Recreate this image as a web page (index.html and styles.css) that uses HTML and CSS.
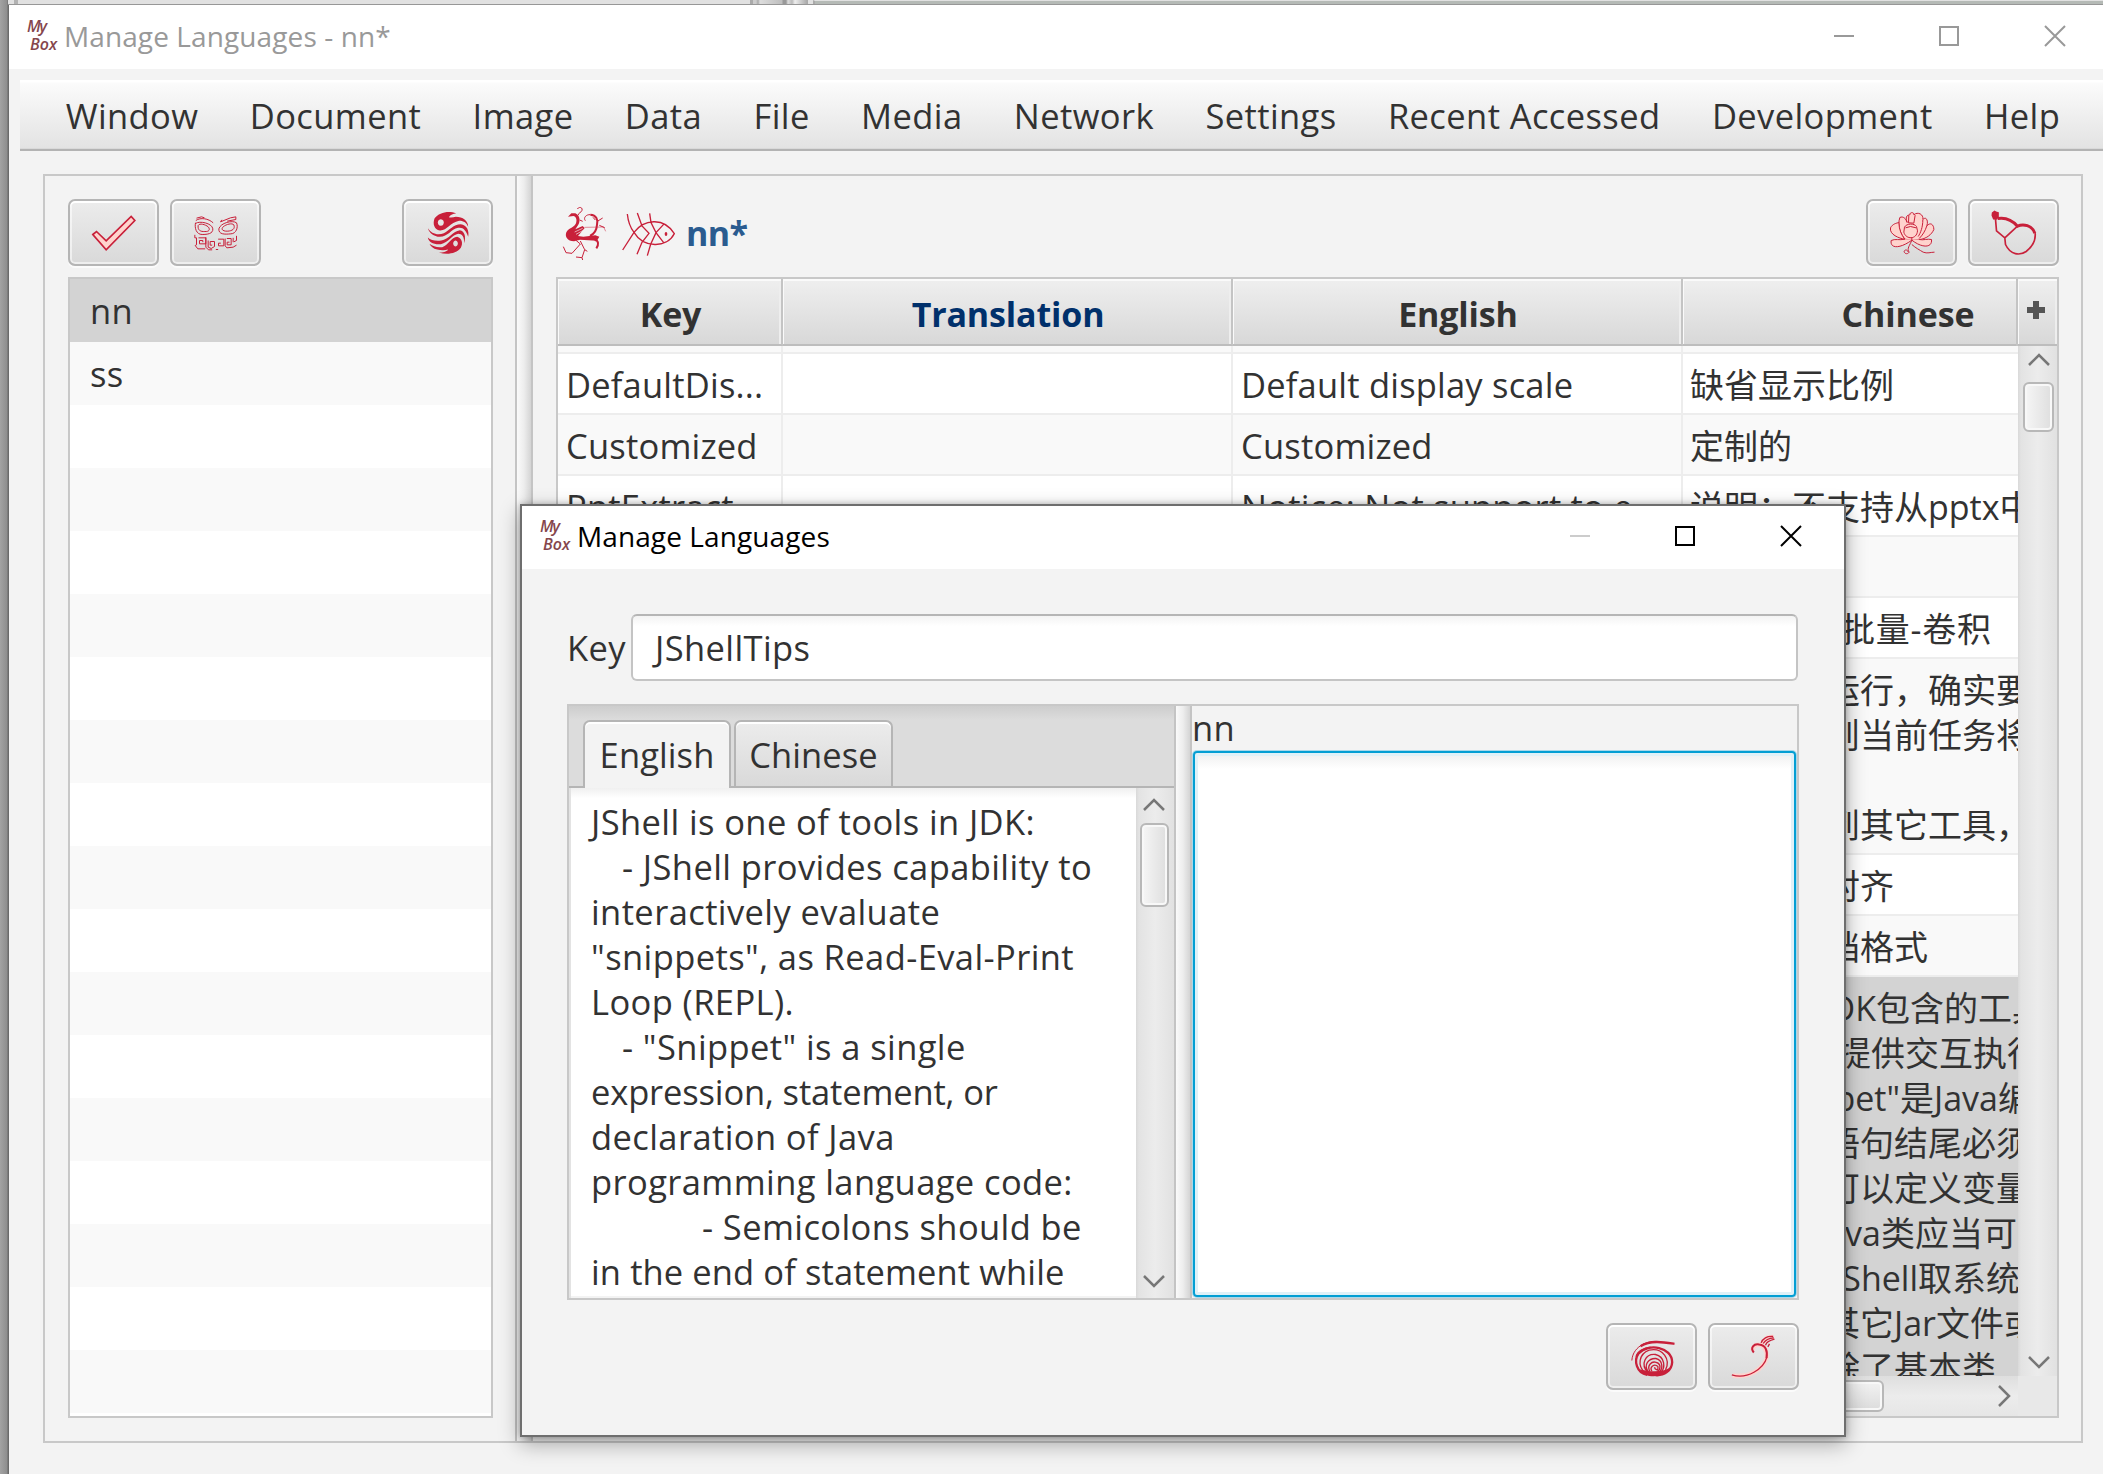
FILE: index.html
```html
<!DOCTYPE html>
<html lang="en">
<head>
<meta charset="utf-8">
<title>Manage Languages</title>
<link rel="stylesheet" href="styles.css">
</head>
<body>
<div class="desktop">
  <div class="backdrop"><i class="bd-tick"></i><i class="bd-split"></i><i class="bd-edge"></i></div>
  <main class="window">
    <header class="titlebar">
      <svg class="app-icon" viewBox="0 0 30 32"><text x="0" y="12" textLength="20">My</text><text x="3" y="30" textLength="27">Box</text></svg>
      <span class="title">Manage Languages - nn*</span>
      <svg class="win-controls" viewBox="0 0 231 22"><path d="M0 11H20M106 2H124V20H106ZM211 1 231 21M231 1 211 21"/></svg>
    </header>
    <nav class="menubar"><span>Window</span><span>Document</span><span>Image</span><span>Data</span><span>File</span><span>Media</span><span>Network</span><span>Settings</span><span>Recent Accessed</span><span>Development</span><span>Help</span></nav>
    <div class="split">
      <section class="lang-pane">
        <div class="toolbar">
          <button class="btn"><svg viewBox="91.5 58.5 138 138"><path d="M97 132 108 123 137 151 212 78 223 90 137 178Z" fill="#ffd3cd" stroke="#c8203a" stroke-width="5"/></svg></button>
          <button class="btn"><svg viewBox="397.5 58.5 138 138" class="line"><path stroke-width="3" d="M406 90C420 80 444 84 458 97M408 83 423 79 432 82M526 79 510 82 480 94 484 88M526 79V87L500 92M405 97C402 112 407 132 425 132 440 132 458 130 457 115 455 98 417 90 405 99ZM413 105C411 119 420 124 433 123 446 124 450 117 443 109 435 102 417 97 413 105ZM528 97C534 110 527 130 511 130 492 132 474 132 475 115 480 97 516 88 528 97ZM520 103C525 116 514 121 502 122 488 123 480 117 488 109 497 101 515 97 520 103ZM403 133V142H408V163L404 165 412 175H434M414 142H436V160H417V150H427V155M436 140V170L444 178H455M443 150V170L452 174 462 168V153H449V164H455M466 177H473M473 146H490V166H474V158H481M494 144V166L499 172 518 170 528 164M499 144H512V163H500V155H507M528 136V150L520 154M518 142V155"/></svg></button>
          <button class="btn push"><svg viewBox="1093.5 58.5 138 138" fill="#c8203a"><path fill-rule="evenodd" d="M1187 69C1165 60 1135 66 1122 84 1116 100 1121 117 1138 120 1160 121 1168 96 1196 91 1211 91 1218 98 1223 109 1223 91 1207 79 1186 79 1179 80 1172 82 1165 80 1170 72 1178 70 1187 69ZM1141 86A9 10 0 1 1 1140.900 86Z"/><path d="M1102 113C1112 128 1130 136 1150 128 1168 119 1178 101 1201 101 1219 103 1227 121 1223 139 1217 119 1207 109 1193 112 1170 117 1163 139 1138 139 1120 138 1106 127 1102 113Z"/><path d="M1102 141C1110 149 1125 152 1142 150 1166 146 1177 122 1198 119 1213 122 1217 139 1211 158 1211 139 1205 130 1193 130 1175 133 1164 157 1141 161 1120 163 1104 155 1102 141Z"/><path fill-rule="evenodd" d="M1107 160C1118 168 1130 172 1145 170 1162 166 1173 139 1190 139 1205 144 1208 159 1201 172 1187 190 1160 194 1135 186 1147 186 1158 185 1163 177 1149 181 1140 179 1130 177 1118 175 1111 168 1107 160ZM1185 150A7 9 0 1 0 1185.100 150Z"/></svg></button>
        </div>
        <ul class="lang-list"><li class="selected">nn</li><li>ss</li><li></li><li></li><li></li><li></li><li></li><li></li><li></li><li></li><li></li><li></li><li></li><li></li><li></li><li></li><li></li><li></li></ul>
      </section>
      <div class="divider"></div>
      <section class="table-pane">
        <div class="toolbar">
          <svg class="phoenix" viewBox="30 45 144 165"><path fill="#c8203a" d="M76 70C90 76 92 94 84 106L76 118 98 108 104 114 84 138 100 140 136 136 148 140 141 152 90 149 72 154C52 154 44 140 49 127 56 114 74 112 78 100 82 88 78 80 70 78L54 80 64 70Z"/><path class="red" stroke-width="3" d="M82 57C87 49 99 52 96 61 94 68 85 68 84 76M89 90 98 94M106 92C99 83 109 73 121 74M158 84 142 94M129 82 136 90M148 106 164 113M78 151 91 162 66 190 48 188 40 170M91 153 104 179 96 203 78 201M96 203 98 210M104 179 112 184"/><path class="red" stroke-width="1.5" d="M104 112 161 111 167 124"/><path class="red" stroke-width="6" d="M121 74C139 75 145 90 141 104 140 124 132 132 120 138M134 150C146 151 147 164 139 175"/><path stroke="#f3f3f3" stroke-width="2" d="M74 126 98 115M78 133 100 121"/></svg>
          <svg class="fish" viewBox="210 60 174 144"><path class="red" stroke-width="4" d="M218 180 252 127C280 90 340 78 373 131 350 176 280 174 252 127 240 112 234 92 232 72M262 69 276 108 297 130 276 157 261 193M299 70 303 98 318 128 341 158M343 101 318 128 302 163 292 197"/><ellipse cx="348" cy="132" rx="4" ry="6" fill="#c8203a"/></svg>
          <b class="doc-name">nn*</b>
          <button class="btn push"><svg viewBox="115.5 58.5 138 138"><path fill="#ffd3cd" stroke="#c8203a" stroke-width="3" stroke-linejoin="round" d="M163 146C150 130 140 106 148 81 158 76 166 84 170 96 164 82 168 72 178 74 176 64 192 64 190 73 202 62 220 72 217 87 228 76 234 92 229 106 240 94 250 102 250 117 244 132 226 146 206 147L184 149Z"/><path fill="#ffd3cd" stroke="#c8203a" stroke-width="3" stroke-linejoin="round" d="M163 146C146 144 116 132 120 112 126 100 138 98 145 96 146 118 152 132 163 146ZM163 146C146 150 134 144 122 150 118 176 150 174 184 149 216 174 246 172 243 147 232 144 218 150 206 147M175 74 174 97 190 98 194 74M217 88C217 110 210 128 203 138M229 106C224 122 216 134 206 144M162 110 160 125C166 148 199 148 201 121L198 108C192 98 168 98 162 110ZM165 112 180 108 197 112M184 149V140"/><path class="red" stroke-width="3" d="M184 149C178 165 168 174 176 185 170 194 160 188 161 182 164 176 172 178 172 184M184 162C196 173 207 178 218 185 230 190 241 185 252 185"/></svg></button>
          <button class="btn"><svg viewBox="421.5 58.5 138 138"><path fill="#c8203a" d="M424 66 432 60 437 63 445 65 445 80 438 88 428 87 423 75Z"/><path class="red" stroke-width="9" d="M441 84C458 81 482 85 501 107 518 99 545 104 553 128"/><path class="red" stroke-width="5" d="M435 86 438 121 463 142 465 162C480 194 508 196 527 183 549 166 556 150 554 128M463 142 501 107" /></svg></button>
        </div>
        <div class="table">
          <div class="thead"><div class="th">Key</div><div class="th blue">Translation</div><div class="th">English</div><div class="th">Chinese</div></div>
          <div class="th plus"><svg viewBox="0 0 18 18"><path d="M6 0H12V6H18V12H12V18H6V12H0V6H6Z"/></svg></div>
          <div class="tbody">
            <div class="tr sliver"><div></div><div></div><div></div><div></div></div>
            <div class="tr"><div>DefaultDis...</div><div></div><div>Default display scale</div><div class="zh">缺省显示比例</div></div>
            <div class="tr odd"><div>Customized</div><div></div><div>Customized</div><div class="zh">定制的</div></div>
            <div class="tr"><div>PptExtract...</div><div></div><div>Notice: Not support to e...</div><div class="zh">说明：不支持从pptx中</div></div>
            <div class="tr odd"><div></div><div></div><div></div><div></div></div>
            <div class="tr"><div></div><div></div><div></div><div class="zh loose">图像操作-批量-卷积</div></div>
            <div class="tr odd tall"><div></div><div></div><div></div><div class="zh">任务正在运行，确实要<br>若继续，则当前任务将<br>被取消<br>可以切换到其它工具，</div></div>
            <div class="tr"><div></div><div></div><div></div><div class="zh">图片水平对齐</div></div>
            <div class="tr odd"><div></div><div></div><div></div><div class="zh">输出的文档格式</div></div>
            <div class="tr current"><div></div><div></div><div></div><div class="zh">
              <p><span class="l186">JShell是JDK</span>包含的工具</p>
              <p><span class="l181">JShell提</span>供交互执行</p>
              <p><span class="l210">- "Snippet"</span>是Java编</p>
              <p><span class="l136">-</span>语句结尾必须</p>
              <p><span class="l136">-</span>可以定义变量</p>
              <p><span class="l191">- Java</span>类应当可以</p>
              <p><span class="l228">- JShell</span>取系统路</p>
              <p><span class="l136">-</span>其它Jar文件或</p>
              <p><span class="l136">-</span>除了基本类</p></div></div>
          </div>
          <div class="vscroll"><svg class="arrow up" viewBox="0 0 24 14"><path d="M2 12 12 2 22 12"/></svg><i class="thumb"></i><svg class="arrow down" viewBox="0 0 24 14"><path d="M2 2 12 12 22 2"/></svg></div>
          <div class="hscroll"><i class="thumb"></i><svg class="arrow" viewBox="0 0 14 24"><path d="M2 2 12 12 2 22"/></svg></div>
          <div class="corner"></div>
        </div>
      </section>
    </div>
  </main>
</div>

<section class="dialog">
  <header class="titlebar">
    <svg class="app-icon" viewBox="0 0 30 32"><text x="0" y="12" textLength="20">My</text><text x="3" y="30" textLength="27">Box</text></svg>
    <span class="title">Manage Languages</span>
    <svg class="win-controls" viewBox="0 0 231 22"><path class="dim" d="M0 11H20"/><path d="M106 2H124V20H106ZM211 1 231 21M231 1 211 21"/></svg>
  </header>
  <div class="key-row"><label>Key</label><div class="field">JShellTips</div></div>
  <div class="editor">
    <div class="source">
      <div class="tabs"><span class="tab active">English</span><span class="tab">Chinese</span></div>
      <div class="source-body">
        <div class="source-text">JShell is one of tools in JDK:
<i class="in1"></i>- JShell provides capability to
interactively evaluate
"snippets", as Read-Eval-Print
Loop (REPL).
<i class="in1"></i>- "Snippet" is a single
<span class="tight">expression, statement, or</span>
declaration of Java
programming language code:
<i class="in2"></i>- Semicolons should be
<span class="tight2">in the end of statement while</span></div>
        <div class="vscroll"><svg class="arrow up" viewBox="0 0 24 14"><path d="M2 12 12 2 22 12"/></svg><i class="thumb"></i><svg class="arrow down" viewBox="0 0 24 14"><path d="M2 2 12 12 22 2"/></svg></div>
      </div>
    </div>
    <div class="divider"></div>
    <div class="target"><label>nn</label><div class="textarea"></div></div>
  </div>
  <div class="actions">
    <button class="btn"><svg viewBox="115.5 70.5 138 138"><path class="red" stroke-width="3" d="M124 150C127 104 180 84 215 96"/><path class="red" stroke-width="7" d="M150 107C180 88 220 95 252 100"/><path class="red" stroke-width="7" d="M170 193C138 187 129 150 144 129 175 96 244 110 245 155 244 181 220 196 195 194"/><path class="red" stroke-width="4" d="M137 138C141 122 160 112 180 110M165 189C138 165 146 130 176 119 218 110 241 148 225 178M173 187C147 160 166 129 195 132 224 139 225 172 211 187M174 185C157 163 175 143 196 144 219 150 217 176 206 185M178 183C168 165 184 150 198 156 213 161 210 177 201 183M184 182C176 169 192 158 202 168 204 176 200 181 194 175L192 170"/><path fill="#c8203a" d="M148 176C165 182 216 188 238 172 224 203 162 207 148 176Z"/></svg></button>
    <button class="btn"><svg viewBox="421.5 70.5 138 138"><g class="red"><path stroke="#ffd3cd" stroke-width="13" d="M426 195C472 202 518 180 529 140 529 100 492 90 485 120M515 98 530 82 549 78"/><path stroke-width="6" d="M490 126C478 112 490 99 506 102 526 104 532 122 528 143"/><path stroke-width="4" d="M529 140C520 175 470 208 424 193M512 97C516 84 530 76 548 78M518 99C525 88 537 83 550 82M525 104C529 92 540 89 552 86M532 109 537 100"/></g></svg></button>
  </div>
</section>
</body>
</html>
```
FILE: styles.css
```css
* { box-sizing: border-box; }
body { margin: 0; width: 2103px; height: 1474px; overflow: hidden; position: relative; font: 34.5px/45px "Open Sans", "Noto Sans CJK SC", sans-serif; letter-spacing: .4px; color: #323232; background: #f3f3f3; }
svg { display: block; overflow: visible; flex: none; }
.red, .line { fill: none; stroke: #c8203a; }
.desktop { width: 2103px; height: 1474px; display: grid; grid-template: 5px 1469px / 9px 2094px; background: linear-gradient(90deg, #a3a3a3, #8e8e8e 7px, #6b6b6b 8px); }
.backdrop { grid-column: 1 / 3; margin-left: 8px; display: flex; background: #e1e1e1; border-bottom: 1px solid #979797; }
.bd-tick { width: 4px; margin-left: 6px; background: #b2b2b2; }
.bd-split { width: 58px; margin-left: 732px; background: linear-gradient(90deg, #aaa 3px, #ccc 3px 6px, #aaa 8px, #ddd 10px, #bebebe 32px, #999 33px 36px, #ddd 38px, #bbb 42px, #eee 45px, #aaa 57px); }
.bd-edge { flex: 1; margin-left: 5px; border-top: 1px solid #e1e1e1; border-left: 2px solid #aaa; background: #b5bab6; }
.window { grid-column: 2; background: #f3f3f3; }
.titlebar { height: 64px; padding: 0 38px 2px 18px; display: flex; align-items: center; background: #fff; font-size: 28px; letter-spacing: .1px; color: #000; }
.window .titlebar { color: #999; }
.title { margin-left: -1px; }
.app-icon { width: 30px; height: 32px; margin-right: 8px; font: italic 600 16px "Open Sans", sans-serif; letter-spacing: 0; fill: #85464c; }
.win-controls { width: 231px; height: 22px; margin-left: auto; fill: none; stroke: #000; stroke-width: 2; }
.window .win-controls { stroke: #999; }
.dim { stroke: #ccc; }
.menubar { height: 71px; margin: 11px 0 0 11px; padding: 0 18px 0 20px; display: flex; align-items: center; background: linear-gradient(#fff 2px, #fbfbfb 3px, #e3e3e3 68px, #cfcfcf 69px, #b3b3b3 69px); }
.menubar span { padding: 2px 25.700px; white-space: nowrap; }
.split { width: 2040px; height: 1269px; margin: 23px 0 0 34px; border: 2px solid #c8c8c8; display: flex; }
.lang-pane { width: 470px; padding: 23px 22px 0 23px; flex: none; }
.divider { width: 18px; flex: none; border: solid #c4c4c4; border-width: 0 2px; background: linear-gradient(90deg, #fafafa, #ededed 50%, #d4d4d4); }
.toolbar { display: flex; height: 78px; gap: 11px; }
.btn { width: 91px; height: 67px; padding: 0; flex: none; display: grid; place-items: center; border: 2px solid #b5b5b5; border-radius: 7px; background: linear-gradient(#ececec, #d9d9d9); box-shadow: inset 0 0 0 2px rgba(255,255,255,.55), inset 0 2px #fff, 0 2px #fbfbfb; }
.btn svg { width: 46px; height: 46px; }
.push { margin-left: auto; }
.lang-list { width: 425px; height: 1141px; margin: 0; padding: 0; list-style: none; border: 2px solid #c8c8c8; background: #fff; }
.lang-list li { height: 63px; padding: 9px 20px; }
.lang-list li:nth-child(even) { background: #f9f9f9; }
.lang-list .selected { background: #d3d3d3; }
.table-pane { width: 1548px; flex: none; padding: 23px 22px 0 23px; }
.phoenix { width: 48px; height: 55px; margin: 6px 1px 0 4px; }
.fish { width: 58px; height: 48px; margin-top: 11px; }
.doc-name { margin: 12px 0 0 -3px; font-size: 34px; letter-spacing: -.6px; color: #2a5b8f; }
.table { width: 1503px; height: 1141px; border: 2px solid #c8c8c8; display: grid; grid-template: 67px 1030px 40px / 1460px 39px; background: #fff; overflow: hidden; }
.thead, .tr { display: grid; grid-template-columns: 225px 450px 450px 450px; width: 1575px; }
.thead, .tbody { overflow: hidden; }
.thead { width: 1460px; border-right: 2px solid #c4c4c4; }
.th { height: 67px; padding: 13px 0 0 2px; text-align: center; font-weight: 700; font-size: 34px; letter-spacing: -.15px; border-right: 2px solid #c4c4c4; border-bottom: 2px solid #bdbdbd; background: linear-gradient(#efefef, #d8d8d8); box-shadow: inset 1px 2px #fafafa, inset -2px 0 #eee; }
.blue { color: #00306b; }
.plus { padding: 22px 0 0 9px; border-right: 0; }
.plus svg { width: 18px; height: 18px; fill: #555; }
.tr > div { height: 61px; padding: 8px 0 0 8px; border: solid #ededed; border-width: 0 2px 2px 0; white-space: nowrap; overflow: hidden; background: #fff; letter-spacing: .2px; }
.tr > .zh { padding: 9px 0 0 7px; letter-spacing: 0; font-size: 34px; }
.tr > .loose { letter-spacing: .8px; }
.tr.sliver > div { height: 8px; padding: 0; background: #f9f9f9; }
.tr.odd > div { background: #f9f9f9; }
.tr.tall > div { height: 196px; }
.tr.current > div { height: 480px; background: #d3d3d3; border-color: #d3d3d3; }
.zh p { margin: 0; display: flex; }
.zh span { flex: none; text-align: right; }
.l136 { width: 136px; }
.l181 { width: 181px; }
.l186 { width: 186px; }
.l191 { width: 191px; }
.l210 { width: 210px; }
.l228 { width: 228px; }
.vscroll { display: flex; flex-direction: column; align-items: center; background: linear-gradient(90deg, #d9d9d9, #e3e3e3 3px, #ececec 50%, #e1e1e1); }
.arrow { fill: none; stroke: #777; stroke-width: 2.500; }
.vscroll .arrow { width: 24px; height: 14px; }
.down { margin-top: auto; }
.table .vscroll { padding: 7px 0 7px 2px; }
.table .vscroll .thumb { width: 31px; height: 50px; margin-top: 15px; }
.thumb { border: 2px solid #b8b8b8; border-radius: 6px; background: linear-gradient(90deg, #f6f6f6, #dedede); box-shadow: inset 0 0 0 2px #f8f8f8; }
.hscroll { display: flex; align-items: center; padding-right: 7px; background: linear-gradient(#dedede, #ececec 50%, #e6e6e6); }
.hscroll .thumb { width: 900px; height: 32px; margin-left: 426px; background: linear-gradient(#f2f2f2, #dcdcdc); }
.hscroll .arrow { width: 14px; height: 24px; margin-left: auto; }
.corner { background: #e8e8e8; }
.dialog { position: absolute; left: 520px; top: 504px; width: 1326px; height: 933px; border: 2px solid #6e6e6e; background: #f3f3f3; box-shadow: 0 7px 20px rgba(0,0,0,.32), 0 0 6px rgba(0,0,0,.25); }
.dialog .titlebar { height: 63px; padding: 0 43px 3px 18px; }
.key-row { display: flex; align-items: center; margin: 45px 46px 0 45px; }
.key-row label { width: 64px; flex: none; }
.field { flex: 1; height: 67px; padding: 9px 22px; border: 2px solid #c4c4c4; border-top-color: #b5b5b5; border-radius: 6px; background: linear-gradient(#f3f3f3, #fff 10px); }
.editor { width: 1232px; height: 596px; margin: 23px 0 0 45px; display: flex; border: 2px solid #c8c8c8; }
.source { width: 605px; }
.tabs { height: 82px; padding: 14px 0 0 14px; display: flex; gap: 3px; background: linear-gradient(#cdcdcd, #dcdcdc 14px); border-bottom: 2px solid #b5b5b5; }
.tab { width: 159px; height: 66px; padding: 10px 0; text-align: center; letter-spacing: .1px; border: 2px solid #b5b5b5; border-bottom: 0; border-radius: 7px 7px 0 0; background: linear-gradient(#ececec, #d9d9d9); box-shadow: inset 0 2px #fff; }
.tab.active { width: 148px; height: 68px; background: #f3f3f3; }
.source-body { height: 510px; display: flex; border-left: 2px solid #e3e3e3; }
.source-text { flex: 1; height: 508px; overflow: hidden; padding: 11px 0 0 20px; white-space: pre; background: linear-gradient(#f0f0f0, #fff 10px); }
.tight { letter-spacing: -.15px; }
.tight2 { letter-spacing: .1px; }
.in1 { display: inline-block; width: 31px; }
.in2 { display: inline-block; width: 111px; }
.source .vscroll { width: 38px; padding: 10px 2px 10px 0; }
.source .vscroll .thumb { width: 29px; height: 84px; margin-top: 11px; }
.target { flex: 1; display: flex; flex-direction: column; }
.target label { height: 45px; margin-top: -1px; }
.textarea { flex: 1; border: 2px solid #039ed3; border-radius: 4px; margin: 1px; box-shadow: inset 0 0 0 3px #dff1f8, 0 0 0 1px #a8d8ea; background: linear-gradient(#efefef, #fff 16px); }
.actions { display: flex; gap: 11px; justify-content: flex-end; margin: 23px 45px 0 0; }
```
